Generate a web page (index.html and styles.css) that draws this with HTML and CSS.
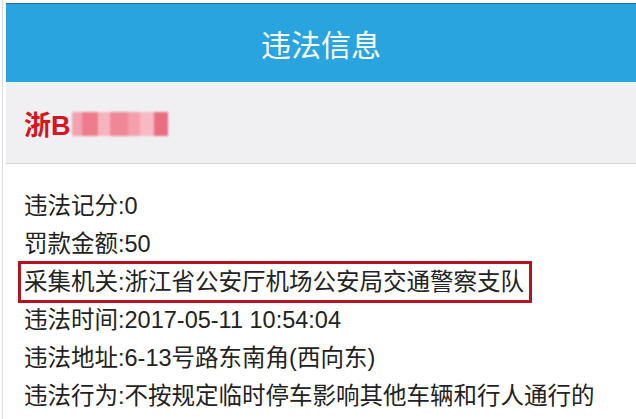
FILE: index.html
```html
<html>
<head>
    <meta charset="utf-8">
    <title>违法信息</title>
    <link rel="stylesheet" href="styles.css">
</head>
<body>
    <div class="page">
        <div class="header">违法信息</div>
        <div class="plate">
            <span class="plate-no">浙B</span>
            <span class="mosaic">
                <i class="m1"></i><i class="m2"></i><i class="m3"></i><i class="m4"></i><i class="m5"></i><i class="m6"></i><i class="m7"></i>
            </span>
        </div>
        <div class="info">
            <div class="row">违法记分:0</div>
            <div class="row">罚款金额:50</div>
            <div class="row"><span class="mark">采集机关:浙江省公安厅机场公安局交通警察支队</span></div>
            <div class="row">违法时间:2017-05-11 10:54:04</div>
            <div class="row">违法地址:6-13号路东南角(西向东)</div>
            <div class="row">违法行为:不按规定临时停车影响其他车辆和行人通行的</div>
        </div>
    </div>
</body>
</html>
```

FILE: styles.css
```css
body {
    margin: 0;
    background: #fff;
    font-family: "Liberation Sans", "Noto Sans CJK SC", sans-serif;
    color: #222;
    overflow: hidden;
}
.page {
    margin-left: 2px;
    border-left: 1px solid #dcdcdc;
    padding: 3px 0 0 3px;
    height: 416px;
}
.header {
    height: 78px;
    line-height: 78px;
    border-top: 1px solid #1f6f98;
    border-bottom: 2px solid #e4f5fb;
    background: #2aa4df;
    color: #fff;
    font-family: "Noto Sans CJK SC", sans-serif;
    font-size: 30px;
    text-align: center;
}
.plate {
    display: flex;
    align-items: center;
    height: 79px;
    padding-left: 18px;
    background: #f0f0f2;
    border-bottom: 1px solid #d3d3d5;
}
.plate-no {
    color: #d8141e;
    font-weight: bold;
    font-size: 27px;
}
.mosaic {
    display: flex;
    align-items: center;
    height: 26px;
    margin-left: 1px;
    filter: blur(1.2px);
}
.mosaic i {
    display: block;
    height: 24px;
}
.m1 { width: 10px; background: #f3a3b0; }
.m2 { width: 16px; background: #ee7c8d; }
.m3 { width: 12px; background: #f6b6c0; }
.m4 { width: 18px; background: #ef8797; }
.m5 { width: 12px; background: #f59fad; }
.m6 { width: 14px; background: #f7bac3; }
.m7 { width: 14px; background: #ea6e81; }
.info {
    padding: 23px 0 0 18px;
    font-size: 23.5px;
}
.row {
    height: 38px;
    line-height: 38px;
    white-space: nowrap;
}
.mark {
    display: inline-block;
    margin: -2px 0 -2px -6px;
    padding: 0 5px 0 3px;
    line-height: 36px;
    border: 3px solid #b3141d;
}
```
